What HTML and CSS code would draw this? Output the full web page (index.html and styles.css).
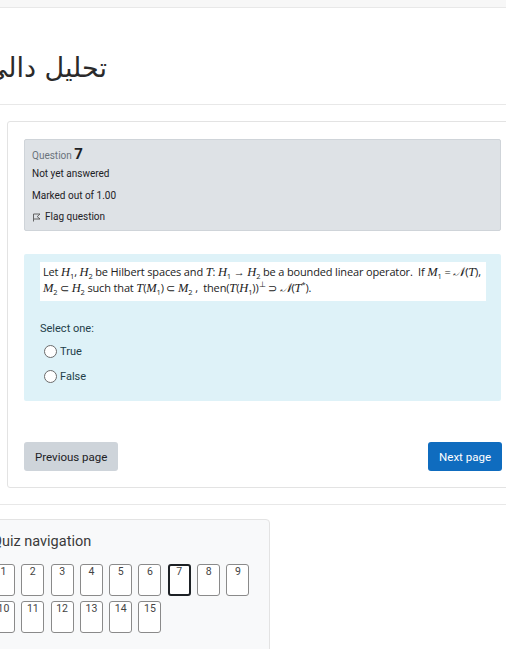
FILE: index.html
```html
<!DOCTYPE html>
<html lang="en">
<head>
  <meta charset="UTF-8">
  <title>Quiz - Question 7</title>
  <link rel="stylesheet" href="styles.css">
</head>
<body>
  <div class="topbar"></div>

  <header class="page-header">
    <h1 class="course-title">تحليل دالي</h1>
  </header>

  <main class="region-main">
    <div class="que">
      <div class="info">
        <h3 class="no">Question <span class="qno">7</span></h3>
        <div class="state">Not yet answered</div>
        <div class="grade">Marked out of 1.00</div>
        <div class="flag">
          <svg class="flag-icon" width="9" height="9" viewBox="0 0 9 9">
            <path d="M1.5 8.5 L1.5 1 L8 1 L5.2 3.6 L8 6 L2 6" fill="none" stroke="#555" stroke-width="0.9"/>
          </svg>
          Flag question
        </div>
      </div>

      <div class="formulation">
        <div class="qtext">
          Let <i>H</i><sub>1</sub>, <i>H</i><sub>2</sub> be Hilbert spaces and <i>T</i>: <i>H</i><sub>1</sub> → <i>H</i><sub>2</sub> be a bounded linear operator.&nbsp; If <i>M</i><sub>1</sub> = <i>𝒩</i>(<i>T</i>),<br>
          <i>M</i><sub>2</sub> ⊂ <i>H</i><sub>2</sub> such that <i>T</i>(<i>M</i><sub>1</sub>) ⊂ <i>M</i><sub>2</sub> ,&nbsp; then(<i>T</i>(<i>H</i><sub>1</sub>))<sup>⊥</sup> ⊃ <i>𝒩</i>(<i>T</i><sup>*</sup>).
        </div>

        <div class="prompt">Select one:</div>
        <div class="answer">
          <label class="option"><span class="radio"></span>True</label>
          <label class="option"><span class="radio"></span>False</label>
        </div>
      </div>

      <div class="submitbtns">
        <button class="btn btn-secondary">Previous page</button>
        <button class="btn btn-primary">Next page</button>
      </div>
    </div>
  </main>

  <div class="divider"></div>

  <aside class="quiz-nav">
    <h5 class="nav-title">Quiz navigation</h5>
    <div class="nav-buttons">
      <span class="qnbutton">1</span>
      <span class="qnbutton">2</span>
      <span class="qnbutton">3</span>
      <span class="qnbutton">4</span>
      <span class="qnbutton">5</span>
      <span class="qnbutton">6</span>
      <span class="qnbutton current">7</span>
      <span class="qnbutton">8</span>
      <span class="qnbutton">9</span>
      <span class="qnbutton">10</span>
      <span class="qnbutton">11</span>
      <span class="qnbutton">12</span>
      <span class="qnbutton">13</span>
      <span class="qnbutton">14</span>
      <span class="qnbutton">15</span>
    </div>
  </aside>
</body>
</html>
```

FILE: styles.css
```css
html, body {
  overflow: hidden;
}
body {
  margin: 0;
  width: 506px;
  height: 649px;
  font-family: Roboto, 'Noto Sans', sans-serif;
  color: #1d2125;
  background: #fff;
}
.topbar {
  height: 7px;
  background: #f7f7f7;
  border-bottom: 1px solid #e8e8e8;
}
.page-header {
  height: 96px;
  border-bottom: 1px solid #e8e8e8;
}
.course-title {
  margin: 0 0 0 -40px;
  width: 147px;
  padding-top: 40px;
  direction: rtl;
  text-align: right;
  white-space: nowrap;
  font-family: 'DejaVu Sans', sans-serif;
  font-weight: normal;
  font-size: 27px;
  line-height: 40px;
  color: #2a2a2a;
}
.region-main {
  padding: 16px 0 0 7px;
}
.que {
  width: 477px;
  padding: 17px 16px 16px 16px;
  border: 1px solid #e3e3e3;
  border-radius: 3px;
}
.info {
  background: #dee2e6;
  border: 1px solid #cfd4d9;
  border-radius: 2px;
  padding: 5px 7px 6px;
}
.no {
  margin: 0 0 4px;
  height: 18px;
  line-height: 18px;
  font-weight: normal;
  font-size: 10px;
  color: #6a737b;
}
.qno {
  font-size: 15px;
  font-weight: bold;
  color: #1d2125;
}
.state, .grade, .flag {
  height: 14px;
  line-height: 14px;
  font-size: 10px;
  color: #1d2125;
}
.state {
  margin-bottom: 8px;
}
.grade {
  margin-bottom: 7px;
}
.flag {
  display: flex;
  align-items: center;
  gap: 4px;
}
.formulation {
  margin-top: 23px;
  background: #def2f8;
  border-radius: 2px;
  padding: 8px 15px 17px 16px;
  color: #1f3c45;
}
.qtext {
  background: #fff;
  padding: 2px 3px 5px;
  font-family: 'Open Sans', sans-serif;
  font-size: 11px;
  line-height: 16px;
  color: #222;
  letter-spacing: -0.15px;
  white-space: nowrap;
  overflow: hidden;
}
.qtext i {
  font-family: 'Liberation Serif', serif;
  font-size: 12.5px;
}
.qtext sub, .qtext sup {
  font-size: 7.5px;
  line-height: 0;
}
.prompt {
  margin-top: 20px;
  height: 16px;
  line-height: 16px;
  font-size: 11px;
  color: #234049;
}
.answer {
  margin-top: 6px;
  display: flex;
  flex-direction: column;
  gap: 9px;
}
.option {
  display: flex;
  align-items: center;
  height: 16px;
  padding-left: 4px;
  font-size: 11px;
  color: #234049;
}
.radio {
  width: 11px;
  height: 11px;
  border: 1px solid #6b6b6b;
  border-radius: 50%;
  background: #fff;
  margin-right: 3px;
}
.submitbtns {
  margin-top: 41px;
  display: flex;
  justify-content: space-between;
}
.btn {
  height: 29px;
  border: 0;
  border-radius: 3px;
  padding: 0 11px;
  font-family: Roboto, sans-serif;
  font-size: 11.5px;
}
.btn-secondary {
  background: #ced4da;
  color: #1d2125;
}
.btn-primary {
  background: #0f6cbf;
  color: #fff;
  margin-right: -1px;
}
.divider {
  margin-top: 16px;
  border-top: 1px solid #e8e8e8;
}
.quiz-nav {
  margin: 14px 0 0 -25px;
  width: 262px;
  height: 140px;
  padding: 13px 15px 0 16px;
  background: #f8f9fa;
  border: 1px solid #e3e3e3;
  border-radius: 4px;
}
.nav-title {
  margin: 0;
  height: 18px;
  line-height: 18px;
  font-weight: normal;
  font-size: 14.5px;
  color: #3a3a3a;
}
.nav-buttons {
  margin-top: 13px;
  display: grid;
  grid-template-columns: repeat(9, 23px);
  column-gap: 6.3px;
  row-gap: 5px;
}
.qnbutton {
  box-sizing: border-box;
  height: 32px;
  border: 1px solid #8a8a8a;
  border-radius: 3px;
  background: #fff;
  text-align: center;
  font-size: 10.5px;
  line-height: 14px;
  color: #444;
}
.qnbutton.current {
  border: 2px solid #1d2125;
  line-height: 12px;
}
```
